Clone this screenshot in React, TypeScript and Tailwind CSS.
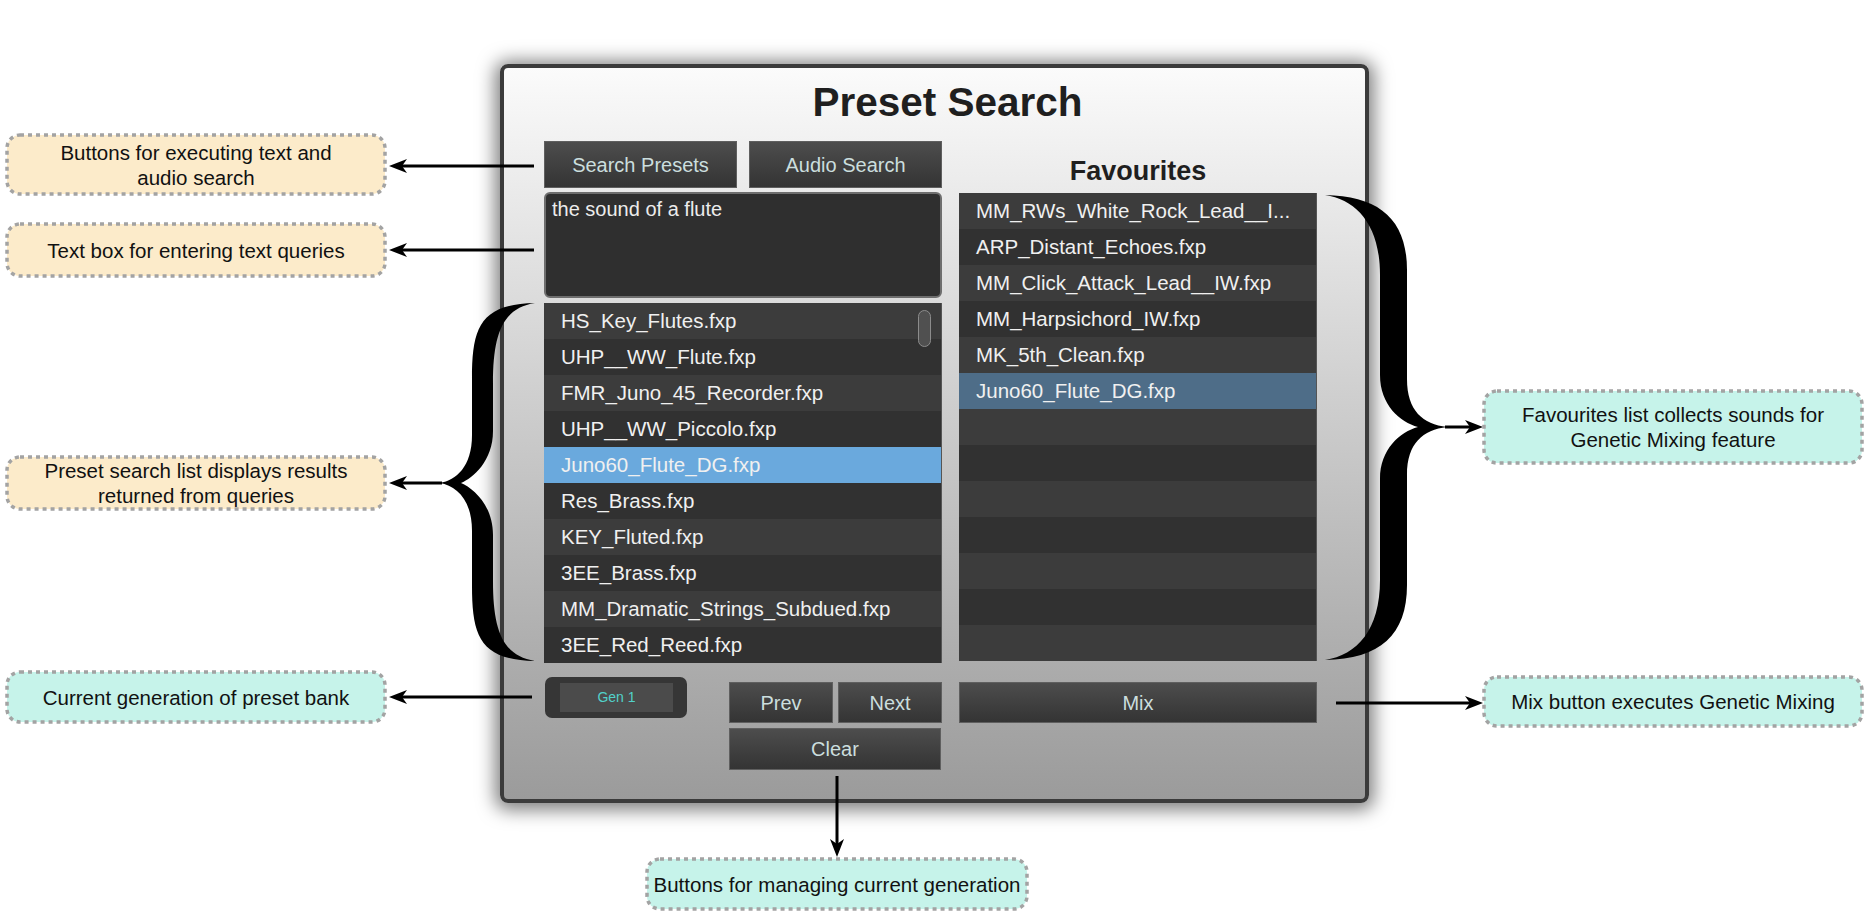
import React from "react";

const SEARCH_RESULTS = [
  "HS_Key_Flutes.fxp",
  "UHP__WW_Flute.fxp",
  "FMR_Juno_45_Recorder.fxp",
  "UHP__WW_Piccolo.fxp",
  "Juno60_Flute_DG.fxp",
  "Res_Brass.fxp",
  "KEY_Fluted.fxp",
  "3EE_Brass.fxp",
  "MM_Dramatic_Strings_Subdued.fxp",
  "3EE_Red_Reed.fxp",
];

const FAVOURITES = [
  "MM_RWs_White_Rock_Lead__I...",
  "ARP_Distant_Echoes.fxp",
  "MM_Click_Attack_Lead__IW.fxp",
  "MM_Harpsichord_IW.fxp",
  "MK_5th_Clean.fxp",
  "Juno60_Flute_DG.fxp",
  "",
  "",
  "",
  "",
  "",
  "",
  "",
];

/** Filled curly brace outline. d = 1 points right, -1 points left. */
function bracePath(e: number, i: number, o: number, t: number, y0: number, yt: number, y1: number, d: number) {
  const n = o + 11 * d;
  return [
    `M${e} ${y0}`,
    `C${e + 55 * d} ${y0 + 1} ${o} ${y0 + 25} ${o} ${y0 + 75}`,
    `L${o} ${yt - 48}`,
    `C${o} ${yt - 16} ${o + 16 * d} ${yt - 3} ${t} ${yt}`,
    `C${o + 16 * d} ${yt + 3} ${o} ${yt + 16} ${o} ${yt + 48}`,
    `L${o} ${y1 - 75}`,
    `C${o} ${y1 - 25} ${e + 55 * d} ${y1 - 1} ${e} ${y1}`,
    `C${e + 32 * d} ${y1 - 5} ${i} ${y1 - 30} ${i} ${y1 - 80}`,
    `L${i} ${yt + 52}`,
    `C${i} ${yt + 22} ${i + 20 * d} ${yt + 5} ${n} ${yt}`,
    `C${i + 20 * d} ${yt - 5} ${i} ${yt - 22} ${i} ${yt - 52}`,
    `L${i} ${y0 + 80}`,
    `C${i} ${y0 + 30} ${e + 32 * d} ${y0 + 5} ${e} ${y0}Z`,
  ].join(" ");
}

function ArrowLeft({ from, to, y }: { from: number; to: number; y: number }) {
  return (
    <g>
      <line x1={from} y1={y} x2={to + 12} y2={y} stroke="#000" strokeWidth={3} />
      <polygon points={`${to},${y} ${to + 18},${y - 7} ${to + 13},${y} ${to + 18},${y + 7}`} fill="#000" />
    </g>
  );
}

function ArrowRight({ from, to, y }: { from: number; to: number; y: number }) {
  return (
    <g>
      <line x1={from} y1={y} x2={to - 12} y2={y} stroke="#000" strokeWidth={3} />
      <polygon points={`${to},${y} ${to - 18},${y - 7} ${to - 13},${y} ${to - 18},${y + 7}`} fill="#000" />
    </g>
  );
}

function Callout({
  className,
  w,
  h,
  fill,
  lines,
}: {
  className: string;
  w: number;
  h: number;
  fill: string;
  lines: string[];
}) {
  return (
    <div className={`absolute flex flex-col items-center justify-center ${className}`}>
      <svg className="absolute inset-0" width={w} height={h}>
        <rect
          x={2}
          y={2}
          width={w - 4}
          height={h - 4}
          rx={13}
          fill={fill}
          stroke="#a3a3a3"
          strokeWidth={3.5}
          strokeDasharray="4 4"
        />
      </svg>
      {lines.map((l) => (
        <div key={l} className="relative text-[20.5px] leading-[25px] text-[#111]">
          {l}
        </div>
      ))}
    </div>
  );
}

function PanelButton({ label, className }: { label: string; className: string }) {
  return (
    <div
      className={`flex items-center justify-center border border-[#5f5f5f] bg-linear-to-b from-[#4d4d4d] to-[#343434] text-[20px] text-[#cbdede] ${className}`}
    >
      {label}
    </div>
  );
}

function Row({ label, index, selected }: { label: string; index: number; selected?: string }) {
  const bg = selected ? selected : index % 2 === 0 ? "bg-[#3c3c3c]" : "bg-[#313131]";
  return (
    <div className={`flex h-[36px] shrink-0 items-center pl-[17px] text-[20.5px] text-[#f0f0f0] ${bg}`}>
      {label}
    </div>
  );
}

export default function App() {
  return (
    <div className="relative h-[922px] w-[1872px] overflow-hidden bg-white font-['Liberation_Sans',Arial,Helvetica,sans-serif]">
      {/* plugin window */}
      <div className="absolute left-[500px] top-[64px] flex h-[739px] w-[869px] flex-col rounded-[8px] border-4 border-[#3b3b3b] bg-linear-to-b from-[#fbfbfb] to-[#9b9b9b] shadow-[0_2px_18px_5px_rgba(0,0,0,0.5)]">
        <div className="flex h-[73px] shrink-0 items-center justify-center pb-[4px] pl-[26px] text-[40.5px] font-bold text-[#1f1f1f]">
          Preset Search
        </div>

        <div className="flex gap-[17px] pl-[40px]">
          <div className="flex w-[398px] flex-col">
            <div className="flex h-[47px] gap-[12px]">
              <PanelButton label="Search Presets" className="w-[193px]" />
              <PanelButton label="Audio Search" className="flex-1" />
            </div>
            <div className="mt-[4px] h-[106px] rounded-[6px] border-2 border-[#6e6e6e] bg-[#2f2f2f] pl-[6px] pt-[4px] text-[20px] leading-[23px] text-[#ececec]">
              the sound of a flute
            </div>
            <div className="relative mt-[5px] flex h-[360px] flex-col overflow-hidden border-r border-[#555]">
              {SEARCH_RESULTS.map((name, i) => (
                <Row key={name} label={name} index={i} selected={i === 4 ? "bg-[#6aa9dd]" : undefined} />
              ))}
              <div className="absolute left-[374px] top-[7px] h-[37px] w-[13px] rounded-full border border-[#8c8c8c] bg-[#505050]" />
            </div>
          </div>

          <div className="flex w-[358px] flex-col">
            <div className="flex h-[52px] items-center justify-center pt-[8px] text-[27px] font-bold text-[#1f1f1f]">
              Favourites
            </div>
            <div className="flex h-[468px] flex-col overflow-hidden border-r border-[#555]">
              {FAVOURITES.map((name, i) => (
                <Row key={i} label={name} index={i} selected={i === 5 ? "bg-[#4e6d88]" : undefined} />
              ))}
            </div>
          </div>
        </div>

        <div className="mt-[14px] flex gap-[17px] pl-[40px]">
          <div className="flex w-[398px] items-start justify-between">
            <div className="ml-[1px] h-[41px] w-[142px] rounded-[7px] bg-[#363636] pl-[15px] pt-[6px]">
              <div className="flex h-[29px] w-[113px] items-center justify-center bg-[#4b4b4b] text-[14px] text-[#52d1c9]">
                Gen 1
              </div>
            </div>
            <div className="mt-[5px] flex w-[213px] flex-col gap-[5px]">
              <div className="flex gap-[5px]">
                <PanelButton label="Prev" className="h-[41px] w-[104px]" />
                <PanelButton label="Next" className="h-[41px] flex-1" />
              </div>
              <PanelButton label="Clear" className="h-[42px] w-[212px]" />
            </div>
          </div>
          <PanelButton label="Mix" className="mt-[5px] h-[41px] w-[358px]" />
        </div>
      </div>

      {/* braces and arrows */}
      <svg className="pointer-events-none absolute inset-0" width={1872} height={922}>
        <path d={bracePath(535, 493, 472, 440, 303, 483, 661, -1)} fill="#000" />
        <path d={bracePath(1325, 1380, 1407, 1447, 195, 427, 660, 1)} fill="#000" />
        <ArrowLeft from={534} to={389} y={166} />
        <ArrowLeft from={534} to={389} y={250} />
        <ArrowLeft from={442} to={389} y={483} />
        <ArrowLeft from={532} to={389} y={697} />
        <ArrowRight from={1445} to={1483} y={427} />
        <ArrowRight from={1336} to={1483} y={703} />
        <line x1={837} y1={776} x2={837} y2={845} stroke="#000" strokeWidth={3} />
        <polygon points="837,857 830,839 837,844 844,839" fill="#000" />
      </svg>

      <Callout
        className="left-[5px] top-[133px] h-[63px] w-[382px]"
        w={382}
        h={63}
        fill="#fcebca"
        lines={["Buttons for executing text and", "audio search"]}
      />
      <Callout
        className="left-[5px] top-[222px] h-[56px] w-[382px]"
        w={382}
        h={56}
        fill="#fcebca"
        lines={["Text box for entering text queries"]}
      />
      <Callout
        className="left-[5px] top-[455px] h-[56px] w-[382px]"
        w={382}
        h={56}
        fill="#fcebca"
        lines={["Preset search list displays results", "returned from queries"]}
      />
      <Callout
        className="left-[5px] top-[670px] h-[54px] w-[382px]"
        w={382}
        h={54}
        fill="#c6f3ea"
        lines={["Current generation of preset bank"]}
      />
      <Callout
        className="left-[1482px] top-[389px] h-[76px] w-[382px]"
        w={382}
        h={76}
        fill="#c6f3ea"
        lines={["Favourites list collects sounds for", "Genetic Mixing feature"]}
      />
      <Callout
        className="left-[1482px] top-[675px] h-[53px] w-[382px]"
        w={382}
        h={53}
        fill="#c6f3ea"
        lines={["Mix button executes Genetic Mixing"]}
      />
      <Callout
        className="left-[645px] top-[857px] h-[54px] w-[384px]"
        w={384}
        h={54}
        fill="#c6f3ea"
        lines={["Buttons for managing current generation"]}
      />
    </div>
  );
}
